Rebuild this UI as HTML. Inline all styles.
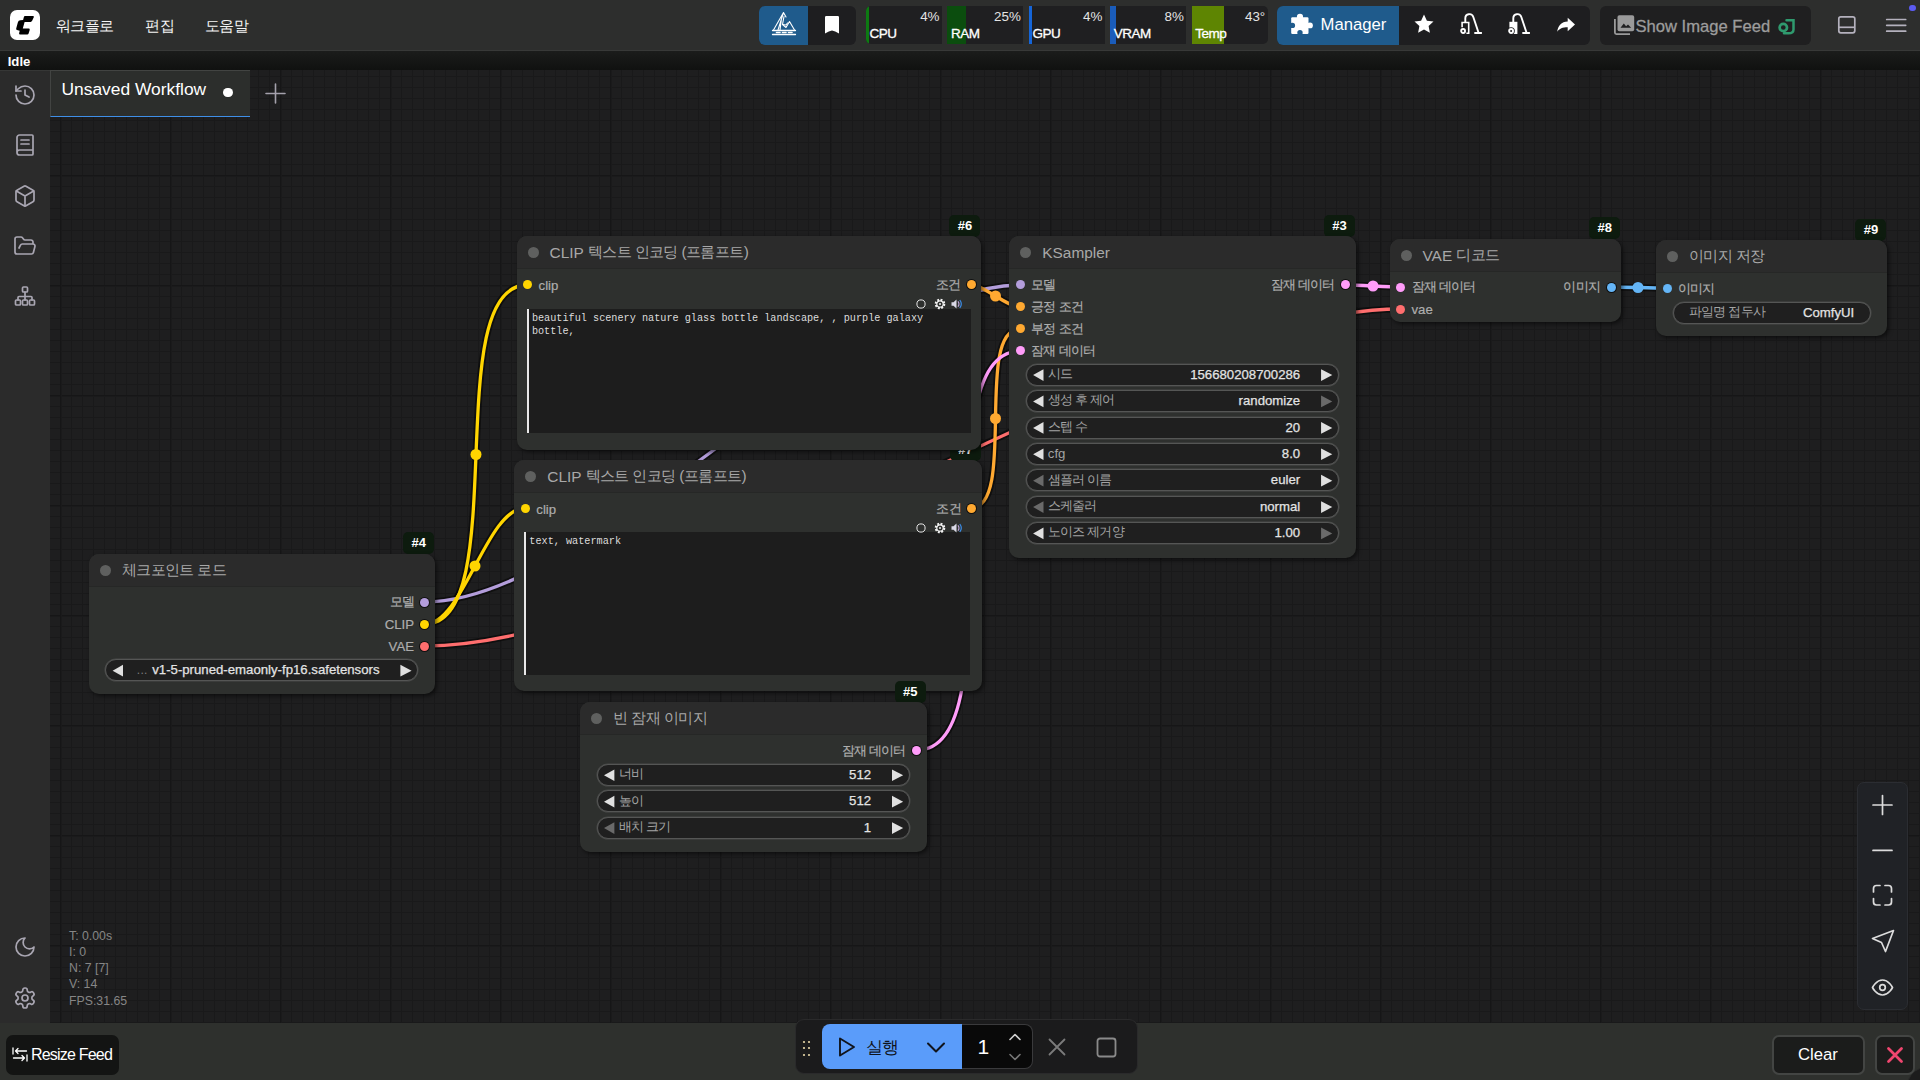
<!DOCTYPE html><html lang="ko"><head><meta charset="utf-8"><title>ComfyUI</title><style>
*{box-sizing:border-box;margin:0;padding:0}
html,body{width:1920px;height:1080px;overflow:hidden;background:#1e1e1f;font-family:"Liberation Sans",sans-serif;}
#root{position:relative;width:1920px;height:1080px;overflow:hidden;background:#1e1e1f}
.abs{position:absolute}
.t{position:absolute;white-space:nowrap;line-height:1}
.node{position:absolute;border-radius:10px;background:#2e302e;box-shadow:2px 2px 4px rgba(0,0,0,.55)}
.node .ttl{position:absolute;left:0;top:0;right:0;height:33px;background:#2b2b2b;border-radius:10px 10px 0 0;border-bottom:1px solid #262726}
.node .dot{position:absolute;left:11px;top:11px;width:11px;height:11px;border-radius:50%;background:#5f605f}
.node .tt{position:absolute;left:33px;top:0;height:33px;line-height:33px;font-size:15.4px;color:#a8a8a8;white-space:nowrap}
.slot{position:absolute;width:9px;height:9px;border-radius:50%}
.sl{position:absolute;font-size:13.2px;color:#adadad;-webkit-text-stroke:0.2px #adadad;white-space:nowrap;line-height:16px;height:16px}
.w{position:absolute;height:22px;border-radius:11px;background:#1f1f1f;border:1px solid #555655;box-shadow:0 0 0 0.5px #484948}
.w .l{position:absolute;left:21px;top:0;line-height:20px;font-size:13.2px;color:#a3a3a3;white-space:nowrap}
.w .v{position:absolute;right:38px;top:0;line-height:20px;font-size:13.2px;color:#e3e3e3;white-space:nowrap}
.w .al,.w .ar{position:absolute;top:3px;width:13px;height:15px;background:#e0e0e0}
.w .al{left:5px;clip-path:polygon(11.7px 1.4px,1.3px 7.3px,11.7px 13.1px)}
.w .ar{right:5px;clip-path:polygon(0.9px 1.4px,12.1px 7.3px,0.9px 13.1px)}
.w .dis{background:#6a6a6a}
.badge{position:absolute;height:22px;border-radius:5px;background:#0d1b0e;color:#fff;font-weight:bold;font-size:13px;line-height:22px;text-align:center}
.ta{position:absolute;background:#1d1d1d;border-left:2px solid #e8e8e8;color:#dcdcdc;font-family:"Liberation Mono",monospace;font-size:10.2px;line-height:13px;padding:3px 0 0 3px;white-space:pre}
.k{letter-spacing:-0.8px;position:relative;top:-0.8px}
.tt .k{letter-spacing:-0.6px;top:-1.3px}
.kt{letter-spacing:-0.8px}
.w .v{-webkit-text-stroke:0.25px #e3e3e3}
</style></head><body><div id="root"><div class="abs" style="left:50px;top:70px;width:1870px;height:953px;background-color:#1e1e1f;background-image:linear-gradient(to right,#161617 1px,#1a1a1b 1px,#1a1a1b 2px,transparent 2px),linear-gradient(to bottom,#161617 1px,#1a1a1b 1px,#1a1a1b 2px,transparent 2px),linear-gradient(to right,#19191a 1px,transparent 1px),linear-gradient(to bottom,#19191a 1px,transparent 1px);background-size:110px 110px,110px 110px,11px 11px,11px 11px;background-position:10px 0,0 -5px,10px 0,0 6px"></div><svg class="abs" style="left:0;top:0" width="1920" height="1080" viewBox="0 0 1920 1080" fill="none"><path d="M425.0 602.0 C593.5 602.0 851.5 285.0 1020.0 285.0" stroke="rgba(0,0,0,.5)" stroke-width="7"/><path d="M425.0 624.0 C513.5 624.0 438.5 285.0 527.0 285.0" stroke="rgba(0,0,0,.5)" stroke-width="7"/><path d="M425.0 624.0 C463.3 624.0 486.7 508.0 525.0 508.0" stroke="rgba(0,0,0,.5)" stroke-width="7"/><path d="M425.0 646.0 C683.1 646.0 1142.9 309.0 1401.0 309.0" stroke="rgba(0,0,0,.5)" stroke-width="7"/><path d="M971.0 285.0 C984.4 285.0 1006.6 307.0 1020.0 307.0" stroke="rgba(0,0,0,.5)" stroke-width="7"/><path d="M971.0 508.0 C1017.4 508.0 973.6 329.0 1020.0 329.0" stroke="rgba(0,0,0,.5)" stroke-width="7"/><path d="M917.0 750.0 C1020.0 750.0 917.0 351.0 1020.0 351.0" stroke="rgba(0,0,0,.5)" stroke-width="7"/><path d="M1345.0 285.0 C1359.0 285.0 1387.0 287.0 1401.0 287.0" stroke="rgba(0,0,0,.5)" stroke-width="7"/><path d="M1610.0 287.0 C1624.0 287.0 1652.0 288.0 1666.0 288.0" stroke="rgba(0,0,0,.5)" stroke-width="7"/><path d="M425.0 602.0 C593.5 602.0 851.5 285.0 1020.0 285.0" stroke="#B39DDB" stroke-width="3.3"/><circle cx="722.5" cy="443.5" r="5.5" fill="#B39DDB"/><path d="M425.0 624.0 C513.5 624.0 438.5 285.0 527.0 285.0" stroke="#FFD500" stroke-width="3.3"/><circle cx="476.0" cy="454.5" r="5.5" fill="#FFD500"/><path d="M425.0 624.0 C463.3 624.0 486.7 508.0 525.0 508.0" stroke="#FFD500" stroke-width="3.3"/><circle cx="475.0" cy="566.0" r="5.5" fill="#FFD500"/><path d="M425.0 646.0 C683.1 646.0 1142.9 309.0 1401.0 309.0" stroke="#FF6E6E" stroke-width="3.3"/><circle cx="913.0" cy="477.5" r="5.5" fill="#FF6E6E"/><path d="M971.0 285.0 C984.4 285.0 1006.6 307.0 1020.0 307.0" stroke="#FFA931" stroke-width="3.3"/><circle cx="995.5" cy="296.0" r="5.5" fill="#FFA931"/><path d="M971.0 508.0 C1017.4 508.0 973.6 329.0 1020.0 329.0" stroke="#FFA931" stroke-width="3.3"/><circle cx="995.5" cy="418.5" r="5.5" fill="#FFA931"/><path d="M917.0 750.0 C1020.0 750.0 917.0 351.0 1020.0 351.0" stroke="#FF9CF9" stroke-width="3.3"/><circle cx="968.5" cy="550.5" r="5.5" fill="#FF9CF9"/><path d="M1345.0 285.0 C1359.0 285.0 1387.0 287.0 1401.0 287.0" stroke="#FF9CF9" stroke-width="3.3"/><circle cx="1373.0" cy="286.0" r="5.5" fill="#FF9CF9"/><path d="M1610.0 287.0 C1624.0 287.0 1652.0 288.0 1666.0 288.0" stroke="#64B5F6" stroke-width="3.3"/><circle cx="1638.0" cy="287.5" r="5.5" fill="#64B5F6"/></svg><div class="badge" style="left:950.0px;top:438.8px;width:31px">#7</div><div class="node" style="left:514.3px;top:460.3px;width:467.5px;height:231.0px"><div class="ttl"><div class="dot"></div><div class="tt">CLIP <span class="k">텍스트 인코딩 (프롬프트)</span></div></div><div class="slot" style="left:6.5px;top:43.9px;background:#FFD500"></div><div class="sl" style="left:22.0px;top:41.4px">clip</div><div class="slot" style="left:453.0px;top:43.9px;background:#FFA931;box-shadow:0 0 0 1px #111"></div><div class="sl" style="right:21.0px;top:41.4px"><span class="k">조건</span></div><div class="ta" style="left:10.0px;top:71.7px;width:445.7px;height:143.0px">text, watermark</div><svg class="abs" style="left:401.8px;top:61.7px" width="50" height="12" viewBox="0 0 50 12"><circle cx="5" cy="6" r="4.1" fill="none" stroke="#e8e8e8" stroke-width="1"/><circle cx="24" cy="6" r="4.2" fill="none" stroke="#f2f2f2" stroke-width="2.2" stroke-dasharray="1.9 1.4"/><circle cx="24" cy="6" r="3.2" fill="none" stroke="#f2f2f2" stroke-width="1.2"/><circle cx="24" cy="6" r="1" fill="#f2f2f2"/><path d="M35.5 4.2h2l3-2.6v8.8l-3-2.6h-2z" fill="#d9d9e6"/><path d="M42 3.2q2 2.8 0 5.6" stroke="#b9a6d8" stroke-width="1.1" fill="none"/><path d="M43.8 2q3 4 0 8" stroke="#3b8eea" stroke-width="1.2" fill="none"/></svg></div><div class="badge" style="left:949.4px;top:214.7px;width:31px">#6</div><div class="node" style="left:516.6px;top:236.2px;width:464.6px;height:213.4px"><div class="ttl"><div class="dot"></div><div class="tt">CLIP <span class="k">텍스트 인코딩 (프롬프트)</span></div></div><div class="slot" style="left:6.5px;top:43.9px;background:#FFD500"></div><div class="sl" style="left:22.0px;top:41.4px">clip</div><div class="slot" style="left:450.1px;top:43.9px;background:#FFA931;box-shadow:0 0 0 1px #111"></div><div class="sl" style="right:21.0px;top:41.4px"><span class="k">조건</span></div><div class="ta" style="left:10.3px;top:72.6px;width:443.9px;height:124.6px">beautiful scenery nature glass bottle landscape, , purple galaxy
bottle,</div><svg class="abs" style="left:399.9px;top:61.7px" width="50" height="12" viewBox="0 0 50 12"><circle cx="5" cy="6" r="4.1" fill="none" stroke="#e8e8e8" stroke-width="1"/><circle cx="24" cy="6" r="4.2" fill="none" stroke="#f2f2f2" stroke-width="2.2" stroke-dasharray="1.9 1.4"/><circle cx="24" cy="6" r="3.2" fill="none" stroke="#f2f2f2" stroke-width="1.2"/><circle cx="24" cy="6" r="1" fill="#f2f2f2"/><path d="M35.5 4.2h2l3-2.6v8.8l-3-2.6h-2z" fill="#d9d9e6"/><path d="M42 3.2q2 2.8 0 5.6" stroke="#b9a6d8" stroke-width="1.1" fill="none"/><path d="M43.8 2q3 4 0 8" stroke="#3b8eea" stroke-width="1.2" fill="none"/></svg></div><div class="badge" style="left:403.2px;top:532.3px;width:31px">#4</div><div class="node" style="left:88.8px;top:553.8px;width:346.2px;height:140.0px"><div class="ttl"><div class="dot"></div><div class="tt"><span class="k">체크포인트 로드</span></div></div><div class="slot" style="left:331.7px;top:43.9px;background:#B39DDB;box-shadow:0 0 0 1px #111"></div><div class="sl" style="right:21.0px;top:41.4px"><span class="k">모델</span></div><div class="slot" style="left:331.7px;top:65.9px;background:#FFD500;box-shadow:0 0 0 1px #111"></div><div class="sl" style="right:21.0px;top:63.4px">CLIP</div><div class="slot" style="left:331.7px;top:87.9px;background:#FF6E6E;box-shadow:0 0 0 1px #111"></div><div class="sl" style="right:21.0px;top:85.4px">VAE</div><div class="w" style="left:16.5px;top:105.6px;width:313.2px"><div class="al"></div><div class="l"><span style="color:#7d7d7d;letter-spacing:0.3px;margin-left:9.5px;font-size:12px">...</span></div><div class="v">v1-5-pruned-emaonly-fp16.safetensors</div><div class="ar"></div></div></div><div class="badge" style="left:894.8px;top:680.9px;width:31px">#5</div><div class="node" style="left:580.2px;top:702.4px;width:346.4px;height:149.3px"><div class="ttl"><div class="dot"></div><div class="tt"><span class="k">빈 잠재 이미지</span></div></div><div class="slot" style="left:331.9px;top:43.9px;background:#FF9CF9;box-shadow:0 0 0 1px #111"></div><div class="sl" style="right:21.0px;top:41.4px"><span class="k">잠재 데이터</span></div><div class="w" style="left:16.5px;top:61.6px;width:313.4px"><div class="al"></div><div class="l"><span class="k">너비</span></div><div class="v">512</div><div class="ar"></div></div><div class="w" style="left:16.5px;top:88.0px;width:313.4px"><div class="al"></div><div class="l"><span class="k">높이</span></div><div class="v">512</div><div class="ar"></div></div><div class="w" style="left:16.5px;top:114.4px;width:313.4px"><div class="al dis"></div><div class="l"><span class="k">배치 크기</span></div><div class="v">1</div><div class="ar"></div></div></div><div class="badge" style="left:1323.9px;top:214.7px;width:31px">#3</div><div class="node" style="left:1009.3px;top:236.2px;width:346.4px;height:321.5px"><div class="ttl"><div class="dot"></div><div class="tt">KSampler</div></div><div class="slot" style="left:6.5px;top:43.9px;background:#B39DDB"></div><div class="sl" style="left:22.0px;top:41.4px"><span class="k">모델</span></div><div class="slot" style="left:6.5px;top:65.9px;background:#FFA931"></div><div class="sl" style="left:22.0px;top:63.4px"><span class="k">긍정 조건</span></div><div class="slot" style="left:6.5px;top:87.9px;background:#FFA931"></div><div class="sl" style="left:22.0px;top:85.4px"><span class="k">부정 조건</span></div><div class="slot" style="left:6.5px;top:109.9px;background:#FF9CF9"></div><div class="sl" style="left:22.0px;top:107.4px"><span class="k">잠재 데이터</span></div><div class="slot" style="left:331.9px;top:43.9px;background:#FF9CF9;box-shadow:0 0 0 1px #111"></div><div class="sl" style="right:21.0px;top:41.4px"><span class="k">잠재 데이터</span></div><div class="w" style="left:16.5px;top:127.6px;width:313.4px"><div class="al"></div><div class="l"><span class="k">시드</span></div><div class="v">156680208700286</div><div class="ar"></div></div><div class="w" style="left:16.5px;top:154.0px;width:313.4px"><div class="al"></div><div class="l"><span class="k">생성 후 제어</span></div><div class="v">randomize</div><div class="ar dis"></div></div><div class="w" style="left:16.5px;top:180.4px;width:313.4px"><div class="al"></div><div class="l"><span class="k">스텝 수</span></div><div class="v">20</div><div class="ar"></div></div><div class="w" style="left:16.5px;top:206.8px;width:313.4px"><div class="al"></div><div class="l">cfg</div><div class="v">8.0</div><div class="ar"></div></div><div class="w" style="left:16.5px;top:233.2px;width:313.4px"><div class="al dis"></div><div class="l"><span class="k">샘플러 이름</span></div><div class="v">euler</div><div class="ar"></div></div><div class="w" style="left:16.5px;top:259.6px;width:313.4px"><div class="al dis"></div><div class="l"><span class="k">스케줄러</span></div><div class="v">normal</div><div class="ar"></div></div><div class="w" style="left:16.5px;top:286.0px;width:313.4px"><div class="al"></div><div class="l"><span class="k">노이즈 제거양</span></div><div class="v">1.00</div><div class="ar dis"></div></div></div><div class="badge" style="left:1589.2px;top:217.4px;width:31px">#8</div><div class="node" style="left:1389.5px;top:238.9px;width:231.5px;height:83.4px"><div class="ttl"><div class="dot"></div><div class="tt">VAE <span class="k">디코드</span></div></div><div class="slot" style="left:6.5px;top:43.9px;background:#FF9CF9"></div><div class="sl" style="left:22.0px;top:41.4px"><span class="k">잠재 데이터</span></div><div class="slot" style="left:6.5px;top:65.9px;background:#FF6E6E"></div><div class="sl" style="left:22.0px;top:63.4px">vae</div><div class="slot" style="left:217.0px;top:43.9px;background:#64B5F6;box-shadow:0 0 0 1px #111"></div><div class="sl" style="right:21.0px;top:41.4px"><span class="k">이미지</span></div></div><div class="badge" style="left:1855.4px;top:218.8px;width:31px">#9</div><div class="node" style="left:1656.0px;top:240.3px;width:231.2px;height:95.8px"><div class="ttl"><div class="dot"></div><div class="tt"><span class="k">이미지 저장</span></div></div><div class="slot" style="left:6.5px;top:43.9px;background:#64B5F6"></div><div class="sl" style="left:22.0px;top:41.4px"><span class="k">이미지</span></div><div class="w" style="left:16.5px;top:61.6px;width:198.2px"><div class="l" style="left:15.5px"><span class="k">파일명 접두사</span></div><div class="v" style="right:15.5px">ComfyUI</div></div></div><div class="t" style="left:69px;top:929.5px;font-size:12.3px;color:#868686">T: 0.00s</div><div class="t" style="left:69px;top:945.8px;font-size:12.3px;color:#868686">I: 0</div><div class="t" style="left:69px;top:962.1px;font-size:12.3px;color:#868686">N: 7 [7]</div><div class="t" style="left:69px;top:978.4px;font-size:12.3px;color:#868686">V: 14</div><div class="t" style="left:69px;top:994.7px;font-size:12.3px;color:#868686">FPS:31.65</div><div class="abs" style="left:1856.5px;top:782px;width:51px;height:227.5px;background:#202226;border:1px solid #2b2d32;border-radius:7px"></div><svg class="abs" style="left:1856px;top:782px" width="52" height="228" viewBox="0 0 52 228" fill="none" stroke="#dcdcdc" stroke-width="1.7" stroke-linecap="round" stroke-linejoin="round"><path d="M26.5 13.5v19M17 23h19"/><path d="M17 68.4h19"/><path d="M17.5 110v-3.5a3 3 0 0 1 3-3H24M29 103.500h3.5a3 3 0 0 1 3 3V110M35.500 116.500V120a3 3 0 0 1-3 3H29M24 123h-3.5a3 3 0 0 1-3-3v-3.500"/><path d="M37.5 148.500L16.500 156.500L25.500 160.500L29.500 169.500Z"/><path d="M16.500 205.500s3.700-7.500 10-7.500s10 7.500 10 7.500s-3.700 7.500-10 7.500s-10-7.500-10-7.500Z"/><circle cx="26.500" cy="205.500" r="2.800"/></svg><div class="abs" style="left:0;top:0;width:1920px;height:51px;background:#2d2e2d"></div><div class="abs" style="left:0;top:50px;width:1920px;height:1px;background:#383938"></div><div class="abs" style="left:0;top:51px;width:1920px;height:19px;background:linear-gradient(#1b1c1b,#101110)"></div><div class="t" style="left:7.700px;top:55px;font-size:13.2px;font-weight:bold;color:#fff">Idle</div><div class="abs" style="left:10px;top:10px;width:30px;height:30px;border-radius:7px;background:#fff"></div><svg class="abs" style="left:10px;top:10px" width="30" height="30" viewBox="0 0 30 30"><path d="M14.9 5.900H22.800Q24.300 5.900 23.800 7.300L22 11.100Q21.600 11.900 20.600 11.900H14.600L12.800 18.500H18.600Q20.100 18.500 19.700 19.900L18.600 23.600Q18.300 24.600 17.200 24.600H10.200Q8.800 24.600 9.100 23.300L9.700 20.700L7 20Q5.900 19.700 6.200 18.600L7.900 12.300Q8.400 10.400 10.300 10.300L13.100 10L13.900 7Q14.200 5.900 14.900 5.900Z" fill="#000"/></svg><div class="t kt" style="left:55.500px;top:18px;font-size:15px;color:#f4f4f4;letter-spacing:-0.450px">워크플로</div><div class="t kt" style="left:145px;top:18px;font-size:15px;color:#f4f4f4;letter-spacing:-0.450px">편집</div><div class="t kt" style="left:204.500px;top:18px;font-size:15px;color:#f4f4f4;letter-spacing:-0.450px">도움말</div><div class="abs" style="left:759px;top:6px;width:97px;height:39px;border-radius:6px;background:#1e1e20;overflow:hidden"><div class="abs" style="left:0;top:0;width:49px;height:39px;background:#1f5b8c"></div></div><svg class="abs" style="left:771px;top:11px" width="26" height="26" viewBox="0 0 26 26" fill="none" stroke="#fff" stroke-width="1.100" stroke-linejoin="round" stroke-linecap="round"><path d="M2.500 19L12.500 1.500L15 6M12.500 1.500L7 19M10.500 7.500L9 19M13 5.500L11.500 13.500L15 16.500L18.500 10.500L23.500 19"/><path d="M11.500 13.500l3.500.5 1.500-2"/><path d="M1.500 19.500h23M1.500 23.500h23" stroke-width="1.300"/><path d="M5.500 21.500h3.500M11.500 21.500h3.500M17.500 21.500h3.500" stroke-width="1.600"/></svg><svg class="abs" style="left:825px;top:15.700px" width="14" height="18" viewBox="0 0 14 18"><path d="M0 1.200Q0 0 1.200 0h11.600Q14 0 14 1.200V17.500Q10 14.800 7 14.500Q4 14.800 0 17.500Z" fill="#fff"/></svg><div class="abs" style="left:866.0px;top:6px;width:76px;height:38px;background:#1f1f21;overflow:hidden;border-radius:5px 0 0 5px"><div class="abs" style="left:0;top:0;width:3.0px;height:38px;background:#0d7a12"></div><div class="t" style="right:2.500px;top:3.800px;font-size:13.400px;color:#e4e4e4">4%</div><div class="t" style="left:3.500px;bottom:4px;font-size:13.500px;color:#fff;letter-spacing:-0.500px;-webkit-text-stroke:0.300px #fff">CPU</div></div><div class="abs" style="left:947.4px;top:6px;width:76px;height:38px;background:#1f1f21;overflow:hidden;border-radius:0"><div class="abs" style="left:0;top:0;width:19.0px;height:38px;background:#0b4d0e"></div><div class="t" style="right:2.500px;top:3.800px;font-size:13.400px;color:#e4e4e4">25%</div><div class="t" style="left:3.500px;bottom:4px;font-size:13.500px;color:#fff;letter-spacing:-0.500px;-webkit-text-stroke:0.300px #fff">RAM</div></div><div class="abs" style="left:1028.9px;top:6px;width:76px;height:38px;background:#1f1f21;overflow:hidden;border-radius:0"><div class="abs" style="left:0;top:0;width:3.5px;height:38px;background:#1565d8"></div><div class="t" style="right:2.500px;top:3.800px;font-size:13.400px;color:#e4e4e4">4%</div><div class="t" style="left:3.500px;bottom:4px;font-size:13.500px;color:#fff;letter-spacing:-0.500px;-webkit-text-stroke:0.300px #fff">GPU</div></div><div class="abs" style="left:1110.3px;top:6px;width:76px;height:38px;background:#1f1f21;overflow:hidden;border-radius:0"><div class="abs" style="left:0;top:0;width:6.0px;height:38px;background:#1a5cba"></div><div class="t" style="right:2.500px;top:3.800px;font-size:13.400px;color:#e4e4e4">8%</div><div class="t" style="left:3.500px;bottom:4px;font-size:13.500px;color:#fff;letter-spacing:-0.500px;-webkit-text-stroke:0.300px #fff">VRAM</div></div><div class="abs" style="left:1191.7px;top:6px;width:76px;height:38px;background:#1f1f21;overflow:hidden;border-radius:0 5px 5px 0"><div class="abs" style="left:0;top:0;width:32.0px;height:38px;background:#5e8502"></div><div class="t" style="right:2.500px;top:3.800px;font-size:13.400px;color:#e4e4e4">43°</div><div class="t" style="left:3.500px;bottom:4px;font-size:13.500px;color:#fff;letter-spacing:-0.500px;-webkit-text-stroke:0.300px #fff">Temp</div></div><div class="abs" style="left:1277px;top:6px;width:313px;height:39px;border-radius:6px;background:#1e1e20;overflow:hidden"><div class="abs" style="left:0;top:0;width:122px;height:39px;background:#1f5b8c"></div></div><svg class="abs" style="left:1290px;top:13px" width="24" height="22" viewBox="0 0 24 22"><rect x="1.200" y="4.300" width="17.300" height="16.600" rx="1.200" fill="#fff"/><circle cx="10" cy="3.900" r="3.100" fill="#fff"/><circle cx="20" cy="12.400" r="2.900" fill="#fff"/><circle cx="2.400" cy="12.400" r="2.700" fill="#1f5b8c"/><circle cx="10" cy="19.700" r="2.700" fill="#1f5b8c"/></svg><div class="t" style="left:1320.500px;top:16.800px;font-size:16.700px;color:#fff">Manager</div><svg class="abs" style="left:1413.500px;top:14.300px" width="20" height="19" viewBox="0 0 22 21"><path d="M11 0.500l3.200 6.900 7.300.9-5.400 5.100 1.400 7.400L11 17.200 4.500 20.800l1.400-7.400L.5 8.300l7.300-.9z" fill="#fff"/></svg><svg class="abs" style="left:1459.0px;top:13px" width="24" height="22" viewBox="0 0 24 22" fill="none" stroke="#fff"><circle cx="4.100" cy="18" r="1.950" stroke-width="1.900"/><path d="M3.100 14.200V9.500H9.700V20.300H7.400" stroke-width="1.600"/><path d="M6.300 9V5.300A4.100 4.100 0 0 1 14.300 4L19.400 19.300" stroke-width="1.900"/><path d="M15.300 20H22.900" stroke-width="2"/></svg><svg class="abs" style="left:1507.0px;top:13px" width="24" height="22" viewBox="0 0 24 22" fill="none" stroke="#fff"><path d="M2.400 8.800H10.400V21H2.400Z" fill="#fff" stroke="none"/><circle cx="4.100" cy="18" r="3.700" fill="#1e1e20" stroke="none"/><circle cx="4.100" cy="18" r="1.950" stroke-width="1.900"/><path d="M6.300 9V5.300A4.100 4.100 0 0 1 14.300 4L19.400 19.300" stroke-width="1.900"/><path d="M15.300 20H22.900" stroke-width="2"/></svg><svg class="abs" style="left:1556px;top:17px" width="20" height="16" viewBox="0 0 20 16"><path d="M11.700 0.700L19 7.500L11.700 14.300V10.300C6.500 10.300 3.500 11.500 1.200 14.800C1.800 8.500 5.500 4.600 11.700 4.400Z" fill="#fff"/></svg><div class="abs" style="left:1600px;top:6px;width:211px;height:39px;border-radius:6px;background:#1f1f20"></div><svg class="abs" style="left:1614px;top:14.500px" width="21" height="20" viewBox="0 0 21 20" fill="none"><rect x="3.500" y="0.200" width="16.700" height="16" rx="1.800" fill="#9a9a9a"/><path d="M0.900 4V17.600q0 1.500 1.500 1.500H16" stroke="#9a9a9a" stroke-width="1.800"/><path d="M6.500 12.800l3.300-4.300 2.300 2.800 1.900-1.700 3.200 3.200z" fill="#1f1f20"/></svg><div class="t" style="left:1635.500px;top:19.200px;font-size:16.600px;color:#9c9c9c;-webkit-text-stroke:0.300px #9c9c9c">Show Image Feed</div><svg class="abs" style="left:1777px;top:18px" width="20" height="18" viewBox="0 0 20 18" fill="none" stroke="#2f9a6e" stroke-linecap="round"><circle cx="6.300" cy="9.500" r="3.700" stroke-width="2.700"/><path d="M9.500 2.300H16.500V11.500Q16.500 15.300 11.500 15.300H7" stroke-width="2.500"/></svg><svg class="abs" style="left:1836.500px;top:15.300px" width="20" height="20" viewBox="0 0 20 20" fill="none" stroke="#b4b1bd" stroke-width="1.700"><rect x="1.800" y="1.800" width="16" height="16" rx="2"/><path d="M1.800 12.300h16"/></svg><svg class="abs" style="left:1885px;top:16px" width="22" height="18" viewBox="0 0 22 18" fill="none" stroke="#b4b1bd" stroke-width="1.700" stroke-linecap="round"><path d="M1.700 3.500h19M1.700 9.300h19M1.700 15.200h19"/></svg><div class="abs" style="left:1908.800px;top:4.700px;width:6.800px;height:6.800px;border-radius:50%;background:#5b5bf0"></div><div class="abs" style="left:0;top:70px;width:50px;height:953px;border-top:1px solid #363736;background:#2b2b2b"></div><svg class="abs" style="left:13px;top:83px" width="24" height="24" viewBox="0 0 24 24" fill="none" stroke="#a9a6b2" stroke-width="1.700" stroke-linecap="round" stroke-linejoin="round"><path d="M3 12a9 9 0 1 0 9-9a9.750 9.750 0 0 0-6.740 2.740L3 8"/><path d="M3 3v5h5m4-1v5l4 2"/></svg><svg class="abs" style="left:13px;top:133px" width="24" height="24" viewBox="0 0 24 24" fill="none" stroke="#a9a6b2" stroke-width="1.700" stroke-linecap="round" stroke-linejoin="round"><path d="M4 19.500v-15A2.500 2.500 0 0 1 6.500 2H19a1 1 0 0 1 1 1v18a1 1 0 0 1-1 1H6.500a1 1 0 0 1 0-5H20M8 11h8M8 7h8"/></svg><svg class="abs" style="left:13px;top:184px" width="24" height="24" viewBox="0 0 24 24" fill="none" stroke="#a9a6b2" stroke-width="1.700" stroke-linecap="round" stroke-linejoin="round"><path d="M21 8a2 2 0 0 0-1-1.730l-7-4a2 2 0 0 0-2 0l-7 4A2 2 0 0 0 3 8v8a2 2 0 0 0 1 1.730l7 4a2 2 0 0 0 2 0l7-4A2 2 0 0 0 21 16Z"/><path d="m3.300 7l8.700 5l8.700-5M12 22V12"/></svg><svg class="abs" style="left:13px;top:234px" width="24" height="24" viewBox="0 0 24 24" fill="none" stroke="#a9a6b2" stroke-width="1.700" stroke-linecap="round" stroke-linejoin="round"><path d="m6 14l1.500-2.900A2 2 0 0 1 9.240 10H20a2 2 0 0 1 1.940 2.500l-1.540 6a2 2 0 0 1-1.950 1.500H4a2 2 0 0 1-2-2V5a2 2 0 0 1 2-2h3.900a2 2 0 0 1 1.690.900l.810 1.200a2 2 0 0 0 1.670.900H18a2 2 0 0 1 2 2v2"/></svg><svg class="abs" style="left:13px;top:284px" width="24" height="24" viewBox="0 0 24 24" fill="none" stroke="#a9a6b2" stroke-width="1.700" stroke-linecap="round" stroke-linejoin="round"><rect x="9.500" y="3" width="5" height="5" rx="1"/><rect x="2.500" y="16" width="5" height="5" rx="1"/><rect x="9.500" y="16" width="5" height="5" rx="1"/><rect x="16.500" y="16" width="5" height="5" rx="1"/><path d="M12 8v8M5 16v-2.500a1 1 0 0 1 1-1h12a1 1 0 0 1 1 1V16"/></svg><svg class="abs" style="left:13px;top:935px" width="24" height="24" viewBox="0 0 24 24" fill="none" stroke="#a9a6b2" stroke-width="1.700" stroke-linecap="round" stroke-linejoin="round"><path d="M12 3a6 6 0 0 0 9 9a9 9 0 1 1-9-9"/></svg><svg class="abs" style="left:13px;top:986px" width="24" height="24" viewBox="0 0 24 24" fill="none" stroke="#a9a6b2" stroke-width="1.700" stroke-linecap="round" stroke-linejoin="round"><path d="M12.220 2h-.440a2 2 0 0 0-2 2v.180a2 2 0 0 1-1 1.730l-.430.250a2 2 0 0 1-2 0l-.150-.080a2 2 0 0 0-2.730.730l-.220.380a2 2 0 0 0 .730 2.730l.150.100a2 2 0 0 1 1 1.720v.510a2 2 0 0 1-1 1.740l-.150.090a2 2 0 0 0-.730 2.730l.220.380a2 2 0 0 0 2.730.730l.150-.080a2 2 0 0 1 2 0l.430.250a2 2 0 0 1 1 1.730V20a2 2 0 0 0 2 2h.440a2 2 0 0 0 2-2v-.180a2 2 0 0 1 1-1.730l.430-.250a2 2 0 0 1 2 0l.150.080a2 2 0 0 0 2.730-.730l.220-.390a2 2 0 0 0-.730-2.730l-.150-.080a2 2 0 0 1-1-1.740v-.500a2 2 0 0 1 1-1.740l.150-.090a2 2 0 0 0 .730-2.730l-.220-.380a2 2 0 0 0-2.730-.730l-.150.080a2 2 0 0 1-2 0l-.430-.250a2 2 0 0 1-1-1.730V4a2 2 0 0 0-2-2"/><circle cx="12" cy="12" r="3"/></svg><div class="abs" style="left:50px;top:70px;width:200px;height:46.700px;background:#2c2e2c;border-bottom:1.500px solid #3f8fe8;border-top:1px solid #424442;border-left:1px solid #424442"></div><div class="t" style="left:61.500px;top:81.300px;font-size:17.400px;color:#fff">Unsaved Workflow</div><div class="abs" style="left:223.200px;top:87.500px;width:9.800px;height:9.800px;border-radius:50%;background:#fff"></div><svg class="abs" style="left:265px;top:83px" width="21" height="21" viewBox="0 0 21 21" fill="none" stroke="#a4a1ac" stroke-width="1.600" stroke-linecap="round"><path d="M10.500 1v19M1 10.500h19"/></svg><div class="abs" style="left:0;top:1023px;width:1920px;height:57px;background:#2e302d"></div><div class="abs" style="left:6px;top:1035px;width:113px;height:40px;border-radius:7px;background:#131413"></div><svg class="abs" style="left:12px;top:1047px" width="16" height="15" viewBox="0 0 16 15" fill="none" stroke="#fff" stroke-width="1.300" stroke-linecap="round" stroke-linejoin="round"><path d="M1 1v6M3.500 4h11M3.500 4l2.500-2.500M3.500 4l2.500 2.500M15 8v6M12.500 11h-11M12.500 11l-2.500-2.500M12.500 11l-2.500 2.500"/></svg><div class="t" style="left:31px;top:1046.800px;font-size:16px;color:#fff;letter-spacing:-0.800px">Resize Feed</div><div class="abs" style="left:1771.500px;top:1035px;width:93.500px;height:40px;border-radius:7px;background:#1b1c1b;border:2px solid #434543"></div><div class="t" style="left:1772px;top:1046.500px;width:92px;text-align:center;font-size:16.700px;color:#fff">Clear</div><div class="abs" style="left:1875px;top:1035px;width:40px;height:40px;border-radius:7px;background:#1b1c1b;border:2px solid #434543"></div><svg class="abs" style="left:1886px;top:1046.300px" width="18" height="18" viewBox="0 0 18 18" fill="none" stroke="#f0466f" stroke-width="2.800" stroke-linecap="round"><path d="M2.500 2.500l13 13M15.500 2.500l-13 13"/></svg><div class="abs" style="left:1907px;top:1067px;width:38px;height:38px;border-radius:50%;background:#1c1c1c;border:1px solid #2a2b2a"></div><div class="abs" style="left:795px;top:1018.500px;width:342.500px;height:55.500px;border-radius:9px;background:#1b1b1c;border:1px solid #2a2a2b"></div><svg class="abs" style="left:802px;top:1040px" width="9" height="17" viewBox="0 0 9 17" fill="#e8d7a8"><circle cx="2" cy="2" r="1.100"/><circle cx="2" cy="8" r="1.100"/><circle cx="2" cy="15" r="1.100"/><circle cx="7" cy="2" r="1.100"/><circle cx="7" cy="8" r="1.100"/><circle cx="7" cy="15" r="1.100"/></svg><div class="abs" style="left:822px;top:1024px;width:139.500px;height:45px;border-radius:8px 0 0 8px;background:#5a9cfa"></div><svg class="abs" style="left:838px;top:1036px" width="18" height="22" viewBox="0 0 18 22" fill="none" stroke="#10141c" stroke-width="1.900" stroke-linejoin="round"><path d="M2 2.500L16 11L2 19.500Z"/></svg><div class="t kt" style="left:866px;top:1039px;font-size:17.300px;color:#10141c;letter-spacing:-1px">실행</div><svg class="abs" style="left:926px;top:1041px" width="20" height="13" viewBox="0 0 20 13" fill="none" stroke="#10141c" stroke-width="2" stroke-linecap="round" stroke-linejoin="round"><path d="M2 2.500l8 8 8-8"/></svg><div class="abs" style="left:961.500px;top:1024px;width:71px;height:45px;border-radius:0 8px 8px 0;background:#090909;border:1px solid #3a3a3c;border-left:none"></div><div class="t" style="left:977.500px;top:1036px;font-size:21px;color:#fff">1</div><svg class="abs" style="left:1008px;top:1030px" width="14" height="34" viewBox="0 0 14 34" fill="none" stroke-width="1.600" stroke-linecap="round" stroke-linejoin="round"><path d="M2 9.500l5-5 5 5" stroke="#d0d0d0"/><path d="M2 24.500l5 5 5-5" stroke="#777"/></svg><svg class="abs" style="left:1048px;top:1038px" width="18" height="18" viewBox="0 0 18 18" fill="none" stroke="#7b7b7b" stroke-width="1.800" stroke-linecap="round"><path d="M1.500 1.500l15 15M16.500 1.500l-15 15"/></svg><svg class="abs" style="left:1096px;top:1037px" width="21" height="21" viewBox="0 0 21 21" fill="none" stroke="#8a8a8a" stroke-width="1.800"><rect x="1.500" y="1.500" width="18" height="18" rx="2.500"/></svg></div></body></html>
